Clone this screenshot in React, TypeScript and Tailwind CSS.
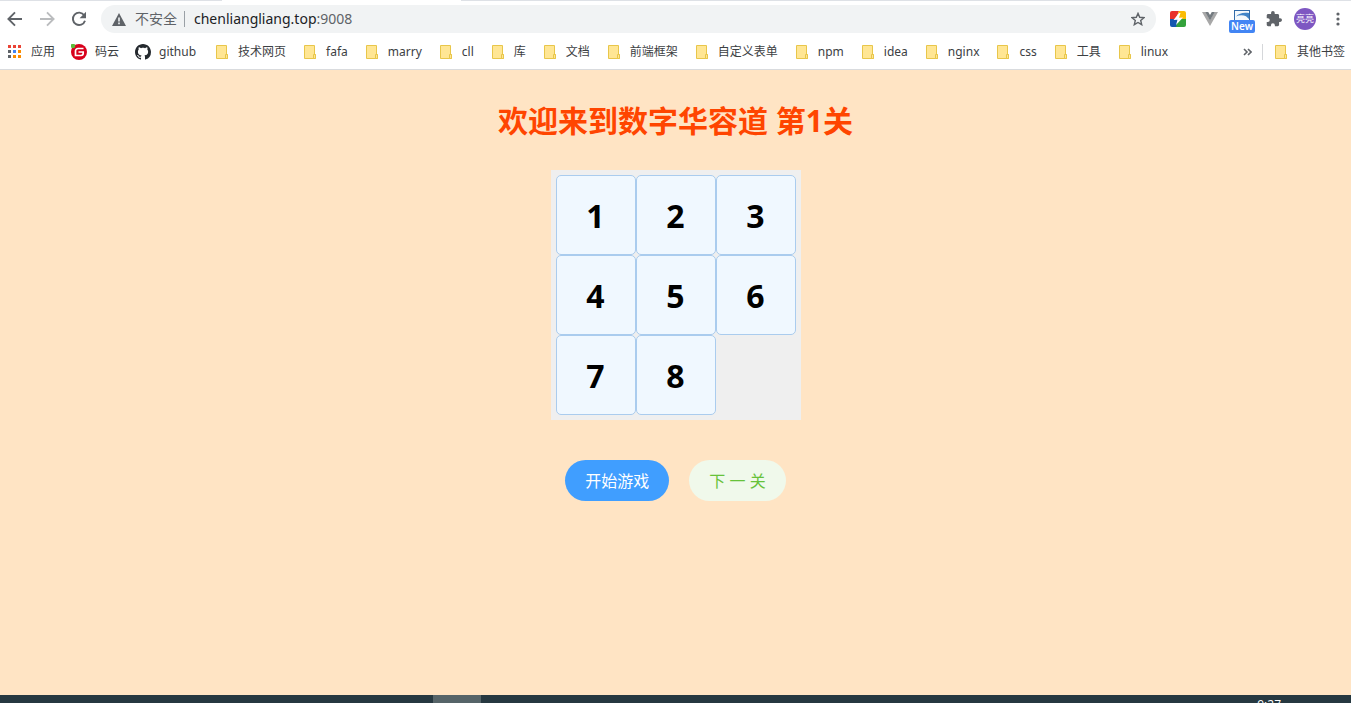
import type { ReactNode } from 'react';

const folders = [
  '技术网页', 'fafa', 'marry', 'cll', '库', '文档', '前端框架',
  '自定义表单', 'npm', 'idea', 'nginx', 'css', '工具', 'linux',
];

const appDots = [
  '#ea4335', '#ea4335', '#ea4335',
  '#5f6368', '#4285f4', '#fb8c00',
  '#5f6368', '#fb8c00', '#fb8c00',
];

const tiles = [1, 2, 3, 4, 5, 6, 7, 8];

function FolderIcon() {
  return (
    <svg className="shrink-0" width="12" height="14" viewBox="0 0 12 14" aria-hidden="true">
      <path d="M.5.5h10v9.2h1v3.8H.5z" fill="#ffe694" stroke="#e8c64a" />
      <path d="M9.5 13.5V9.5h2v4z" fill="#ffe694" stroke="#e8c64a" />
    </svg>
  );
}

function Bookmark({ icon, label, wide }: { icon: ReactNode; label: string; wide?: boolean }) {
  return (
    <a href="#" className={`flex shrink-0 items-center whitespace-nowrap ${wide ? 'gap-2.5' : 'gap-2'}`}>
      {icon}
      {label}
    </a>
  );
}

function ArrowIcon({ color, flip }: { color: string; flip?: boolean }) {
  return (
    <svg width="16" height="16" viewBox="0 0 16 16" fill="none" stroke={color} strokeWidth="1.9" aria-hidden="true">
      <path d={flip ? 'M1 8h13M8 1.3L14.6 8 8 14.7' : 'M15 8H2M8 1.3L1.4 8 8 14.7'} />
    </svg>
  );
}

function Toolbar() {
  return (
    <div className="flex h-9 items-center pl-[7px] pr-[5px]">
      <button aria-label="后退" className="mr-4"><ArrowIcon color="#5f6368" /></button>
      <button aria-label="前进" className="mr-4"><ArrowIcon color="#babcbe" flip /></button>
      <button aria-label="重新加载" className="mr-[14px]">
        <svg width="16" height="16" viewBox="0 0 16 16" aria-hidden="true">
          <path d="M13.2 4.3A6.2 6.2 0 1 0 14 9.8" fill="none" stroke="#5f6368" strokeWidth="1.9" />
          <path d="M15 .8v6.4H8.6z" fill="#5f6368" />
        </svg>
      </button>
      <div className="flex h-7 flex-1 items-center rounded-full bg-[#f1f3f4] pl-[11px] pr-[11px] text-sm">
        <svg className="mr-[9px] shrink-0" width="14" height="13" viewBox="0 0 14 13" aria-hidden="true">
          <path d="M7 0l7 13H0z" fill="#5f6368" />
          <path d="M6.2 4.6h1.6v3.8H6.2zM6.2 9.6h1.6v1.6H6.2z" fill="#f1f3f4" />
        </svg>
        <span className="whitespace-nowrap text-[#5f6368]">不安全</span>
        <span className="ml-[7px] mr-[9px] h-4 w-px bg-[#9aa0a6]" />
        <span className="flex-1 whitespace-nowrap text-[#202124]">
          chenliangliang.top<span className="text-[#5f6368]">:9008</span>
        </span>
        <button aria-label="为此标签页添加书签">
          <svg width="14" height="14" viewBox="0 0 14 14" aria-hidden="true">
            <path d="M7 1.4l1.7 3.9 4.2.4-3.2 2.8 1 4.2L7 10.5l-3.7 2.2 1-4.2L1.1 5.7l4.2-.4z" fill="none" stroke="#5f6368" strokeWidth="1.4" />
          </svg>
        </button>
      </div>
      <div className="ml-3.5 flex items-center">
        <button aria-label="迅捷扩展" className="mr-4">
          <svg width="16" height="16" viewBox="0 0 16 16" aria-hidden="true">
            <defs><clipPath id="flash"><rect width="16" height="16" rx="2" /></clipPath></defs>
            <g clipPath="url(#flash)">
              <path d="M0 0h9L6 8H0z" fill="#e8322c" />
              <path d="M9 0h7v8H6z" fill="#fbbc05" />
              <path d="M0 8h8l-1 8H0z" fill="#1558b0" />
              <path d="M8 8h8v8H6z" fill="#34a23c" />
              <path d="M9 2L3.500 9l4-.2L6 14l7-7.500-4 .2L10.500 2z" fill="#fff" />
            </g>
          </svg>
        </button>
        <button aria-label="Vue.js devtools" className="mr-[11px]">
          <svg width="16" height="14" viewBox="0 0 16 14" aria-hidden="true">
            <path d="M0 0h3.4L8 8l4.6-8H16L8 14z" fill="#a8a8a8" />
            <path d="M3.2 0h3L8 3l1.8-3h3L8 8.4z" fill="#747b80" />
          </svg>
        </button>
        <button aria-label="截图扩展" className="mr-[11px] flex flex-col items-center">
          <svg className="mt-1" width="16" height="10" viewBox="0 0 16 10" aria-hidden="true">
            <path d="M0 0h16v10H0z" fill="#326ba9" />
            <path d="M1 1h14v9H1z" fill="#f5f9fc" />
            <path d="M2 6.500C5 3.200 9 2.200 15 3v6L12 6.200C9 4.800 5 5 2 6.500z" fill="#4285c8" />
          </svg>
          <span className="flex h-[13px] w-[26px] items-center justify-center rounded-[2px] bg-[#4285f4] text-[10px] font-semibold text-white">New</span>
        </button>
        <button aria-label="扩展程序" className="mr-3">
          <svg width="16" height="16" viewBox="1 1 22 22" aria-hidden="true">
            <path fill="#5f6368" d="M20.5 11H19V7c0-1.100-.9-2-2-2h-4V3.500a2.500 2.500 0 0 0-5 0V5H4c-1.100 0-2 .9-2 2v3.800h1.500a2.700 2.700 0 0 1 0 5.400H2V20c0 1.100.9 2 2 2h3.800v-1.500a2.700 2.700 0 0 1 5.400 0V22H17c1.100 0 2-.9 2-2v-4h1.500a2.500 2.500 0 0 0 0-5z" />
          </svg>
        </button>
        <button aria-label="用户" className="mr-[14px] flex size-[22px] items-center justify-center rounded-full bg-[#7e57c2] text-[9px] text-white">亮亮</button>
        <button aria-label="更多" className="flex w-4 justify-center">
          <svg width="4" height="14" viewBox="0 0 4 14" fill="#5f6368" aria-hidden="true">
            <circle cx="2" cy="2" r="1.600" /><circle cx="2" cy="7" r="1.600" /><circle cx="2" cy="12" r="1.600" />
          </svg>
        </button>
      </div>
    </div>
  );
}

function BookmarkBar() {
  return (
    <nav className="flex h-[33px] items-center border-b border-[#d9dbde] pb-0.5 pl-2 pr-1.5 text-xs text-[#3c4043]">
      <div className="flex flex-1 items-center gap-4">
        <Bookmark
          label="应用"
          icon={
            <svg className="mr-px" width="14" height="14" viewBox="0 0 14 14" aria-hidden="true">
              {appDots.map((fill, i) => (
                <rect key={i} x={(i % 3) * 5} y={Math.floor(i / 3) * 5} width="3" height="3" fill={fill} />
              ))}
            </svg>
          }
        />
        <Bookmark
          label="码云"
          icon={
            <svg width="16" height="16" viewBox="0 0 16 16" aria-hidden="true">
              <circle cx="8" cy="8" r="8" fill="#d8001b" />
              <path d="M12.500 4.500H7a2.500 2.500 0 0 0-2.500 2.500v4.500H10A2.200 2.200 0 0 0 12.200 9.300V8H7.500" fill="none" stroke="#fff" strokeWidth="1.700" />
              <circle cx="2" cy="2" r="2.300" fill="#5dbb3a" />
            </svg>
          }
        />
        <Bookmark
          label="github"
          icon={
            <svg width="16" height="16" viewBox="0 0 16 16" aria-hidden="true">
              <path fill="#24292e" d="M8 0C3.580 0 0 3.580 0 8c0 3.540 2.290 6.530 5.470 7.590.4.070.55-.17.55-.38 0-.19-.01-.82-.01-1.490-2.010.37-2.530-.49-2.690-.94-.09-.23-.48-.94-.82-1.130-.28-.15-.68-.52-.01-.53.63-.01 1.080.58 1.230.82.72 1.210 1.870.87 2.330.66.070-.52.28-.87.51-1.070-1.780-.2-3.640-.89-3.640-3.950 0-.87.31-1.590.82-2.150-.08-.2-.36-1.020.08-2.120 0 0 .67-.21 2.200.82.64-.18 1.320-.27 2-.27s1.360.09 2 .27c1.530-1.040 2.200-.82 2.200-.82.44 1.100.16 1.920.08 2.120.51.56.82 1.270.82 2.150 0 3.070-1.870 3.750-3.650 3.950.29.25.54.73.54 1.480 0 1.070-.01 1.930-.01 2.200 0 .21.15.46.55.38A8.010 8.010 0 0 0 16 8c0-4.420-3.580-8-8-8z" />
            </svg>
          }
        />
        <div className="ml-1 flex items-center gap-[18px]">
          {folders.map((name) => (
            <Bookmark key={name} label={name} icon={<FolderIcon />} wide />
          ))}
        </div>
      </div>
      <button aria-label="更多书签" className="mr-[10px]">
        <svg width="9" height="8" viewBox="0 0 9 8" fill="none" stroke="#5f6368" strokeWidth="1.600" aria-hidden="true">
          <path d="M1 1l3 3-3 3M5 1l3 3-3 3" />
        </svg>
      </button>
      <span className="mr-3 h-4 w-px bg-[#d5d7da]" />
      <Bookmark label="其他书签" icon={<FolderIcon />} wide />
    </nav>
  );
}

export default function App() {
  return (
    <div className="flex h-screen flex-col overflow-hidden bg-white font-['Open_Sans','Noto_Sans_CJK_SC',sans-serif]">
      <header className="shrink-0 font-['Noto_Sans','Noto_Sans_CJK_SC',sans-serif]">
        <div className="flex h-px">
          <div className="w-[222px] bg-[#dee1e6]" />
          <div className="w-[239px]" />
          <div className="flex-1 bg-[#dee1e6]" />
        </div>
        <Toolbar />
        <BookmarkBar />
      </header>
      <main className="flex flex-1 flex-col items-center bg-[#ffe4c4] pt-[31px]">
        <h1 className="text-[30px] font-bold leading-10 text-[#ff4500]">欢迎来到数字华容道 第1关</h1>
        <div className="mt-[29px] grid grid-cols-3 bg-[#efefef] p-[5px]">
          {tiles.map((n) => (
            <button key={n} className="size-20 rounded-[5px] border border-[#aaccee] bg-[#f0f8ff] pt-0.5 text-[32px] font-bold text-black">
              {n}
            </button>
          ))}
        </div>
        <div className="mt-10 flex gap-5">
          <button className="h-[41px] rounded-full bg-[#409eff] px-5 text-base text-white">开始游戏</button>
          <button className="h-[41px] rounded-full bg-[#f0f9eb] px-5 text-base text-[#67c23a]">下 一 关</button>
        </div>
      </main>
      <footer className="flex h-2 shrink-0 overflow-hidden bg-[#263840] text-xs text-white">
        <div className="w-[433px]" />
        <div className="w-12 bg-[#566468]" />
        <time className="ml-auto mr-[70px] pt-0.5">9:27</time>
      </footer>
    </div>
  );
}
